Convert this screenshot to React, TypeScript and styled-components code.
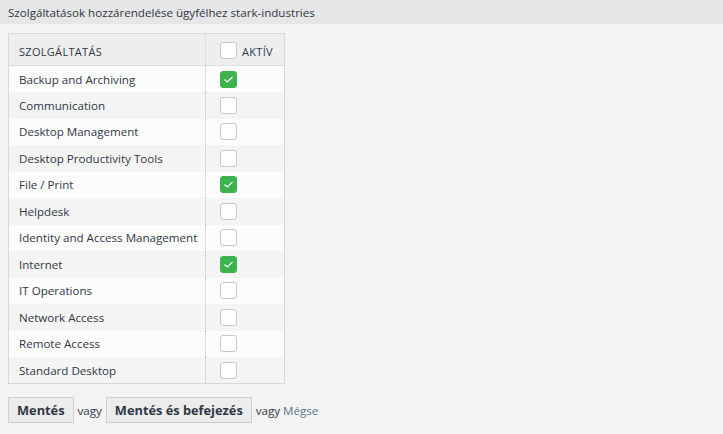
import * as React from "react";
import styled, { createGlobalStyle } from "styled-components";

const GlobalStyle = createGlobalStyle`
  html, body {
    margin: 0;
    padding: 0;
    background: #f3f3f3;
  }
  body {
    font-family: "Open Sans", "Noto Sans", sans-serif;
    font-size: 11.6px;
    color: #303846;
  }
`;

const Page = styled.div`
  width: 723px;
  height: 434px;
  background: #f3f3f3;
`;

const HeaderBar = styled.div`
  height: 24px;
  background: #e6e6e6;
  padding: 0 8px;
  display: flex;
  align-items: center;
  font-size: 11.6px;
  color: #303846;
`;

const Content = styled.div`
  padding: 9px 8px 0 8px;
`;

const Table = styled.table`
  width: 277px;
  border-collapse: collapse;
  border: 1px solid #d8d8d8;
  table-layout: fixed;
`;

const HeadCell = styled.th<{ $narrow?: boolean }>`
  height: 31px;
  background: #eeeeee;
  border-bottom: 1px solid #dcdcdc;
  border-left: ${({ $narrow }) => ($narrow ? "1px solid #dcdcdc" : "none")};
  width: ${({ $narrow }) => ($narrow ? "64px" : "auto")};
  padding: 0 0 0 ${({ $narrow }) => ($narrow ? "14px" : "10px")};
  text-align: left;
  vertical-align: bottom;
  font-weight: normal;
  font-size: 11px;
  text-transform: uppercase;
  letter-spacing: 0.3px;
  color: #303846;
`;

const HeadInner = styled.div`
  display: flex;
  align-items: flex-end;
  gap: 5px;
  padding-bottom: 6px;
`;

const HeadLabel = styled.span`
  line-height: 14px;
`;

const Row = styled.tr<{ $odd: boolean }>`
  height: 26.5px;
  background: ${({ $odd }) => ($odd ? "#fcfcfc" : "#f4f4f4")};
`;

const NameCell = styled.td`
  padding: 0 0 0 10px;
  font-size: 11.6px;
  white-space: nowrap;
`;

const CheckCell = styled.td`
  border-left: 1px dotted #c4c4c4;
  padding: 0 0 0 14px;
`;

const Box = styled.span<{ $checked: boolean }>`
  display: flex;
  align-items: center;
  justify-content: center;
  width: 17px;
  height: 17px;
  box-sizing: border-box;
  border-radius: 3px;
  border: 1px solid ${({ $checked }) => ($checked ? "#3eb24c" : "#c3c7cf")};
  background: ${({ $checked }) => ($checked ? "#3eb24c" : "#ffffff")};
`;

const Actions = styled.div`
  display: flex;
  align-items: center;
  gap: 4px;
  margin-top: 13px;
  font-size: 11.6px;
`;

const Button = styled.button`
  height: 26px;
  padding: 0 8px;
  background: #ececec;
  border: 1px solid #cfcfcf;
  font-family: "Open Sans", "Noto Sans", sans-serif;
  font-size: 12.8px;
  font-weight: bold;
  color: #303846;
  cursor: pointer;
`;

const Link = styled.a`
  color: #5a7394;
  text-decoration: none;
`;

const services = [
  { name: "Backup and Archiving", active: true },
  { name: "Communication", active: false },
  { name: "Desktop Management", active: false },
  { name: "Desktop Productivity Tools", active: false },
  { name: "File / Print", active: true },
  { name: "Helpdesk", active: false },
  { name: "Identity and Access Management", active: false },
  { name: "Internet", active: true },
  { name: "IT Operations", active: false },
  { name: "Network Access", active: false },
  { name: "Remote Access", active: false },
  { name: "Standard Desktop", active: false },
];

const Check = ({ checked }: { checked: boolean }) => (
  <Box $checked={checked}>
    {checked && (
      <svg width="11" height="9" viewBox="0 0 11 9">
        <path d="M1.5 4.5 L4.2 7 L9.5 2" fill="none" stroke="#ffffff" strokeWidth="1.1" />
      </svg>
    )}
  </Box>
);

export default function App() {
  return (
    <Page>
      <GlobalStyle />
      <HeaderBar>Szolgáltatások hozzárendelése ügyfélhez stark-industries</HeaderBar>
      <Content>
        <Table>
          <thead>
            <tr>
              <HeadCell>
                <HeadInner>
                  <HeadLabel>Szolgáltatás</HeadLabel>
                </HeadInner>
              </HeadCell>
              <HeadCell $narrow>
                <HeadInner>
                  <Check checked={false} />
                  <HeadLabel>Aktív</HeadLabel>
                </HeadInner>
              </HeadCell>
            </tr>
          </thead>
          <tbody>
            {services.map((s, i) => (
              <Row key={s.name} $odd={i % 2 === 0}>
                <NameCell>{s.name}</NameCell>
                <CheckCell>
                  <Check checked={s.active} />
                </CheckCell>
              </Row>
            ))}
          </tbody>
        </Table>
        <Actions>
          <Button>Mentés</Button>
          <span>vagy</span>
          <Button>Mentés és befejezés</Button>
          <span>
            vagy <Link href="#">Mégse</Link>
          </span>
        </Actions>
      </Content>
    </Page>
  );
}
